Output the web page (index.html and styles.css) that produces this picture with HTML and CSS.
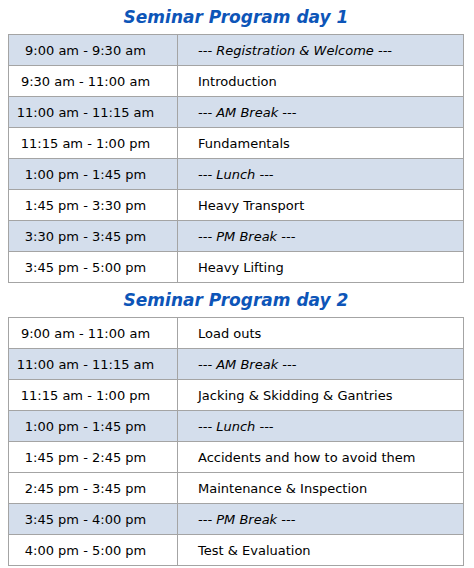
FILE: index.html
```html
<!DOCTYPE html>
<html>
<head>
<meta charset="utf-8">
<link rel="stylesheet" href="styles.css">
</head>
<body>
<div class="page">
  <h2 class="title">Seminar Program day 1</h2>
  <table class="program">
    <tr class="shade"><td class="time">9:00 am - 9:30 am</td><td class="act brk">--- Registration &amp; Welcome ---</td></tr>
    <tr><td class="time">9:30 am - 11:00 am</td><td class="act">Introduction</td></tr>
    <tr class="shade"><td class="time">11:00 am - 11:15 am</td><td class="act brk">--- AM Break ---</td></tr>
    <tr><td class="time">11:15 am - 1:00 pm</td><td class="act">Fundamentals</td></tr>
    <tr class="shade"><td class="time">1:00 pm - 1:45 pm</td><td class="act brk">--- Lunch ---</td></tr>
    <tr><td class="time">1:45 pm - 3:30 pm</td><td class="act">Heavy Transport</td></tr>
    <tr class="shade"><td class="time">3:30 pm - 3:45 pm</td><td class="act brk">--- PM Break ---</td></tr>
    <tr><td class="time">3:45 pm - 5:00 pm</td><td class="act">Heavy Lifting</td></tr>
  </table>
  <h2 class="title">Seminar Program day 2</h2>
  <table class="program">
    <tr><td class="time">9:00 am - 11:00 am</td><td class="act">Load outs</td></tr>
    <tr class="shade"><td class="time">11:00 am - 11:15 am</td><td class="act brk">--- AM Break ---</td></tr>
    <tr><td class="time">11:15 am - 1:00 pm</td><td class="act">Jacking &amp; Skidding &amp; Gantries</td></tr>
    <tr class="shade"><td class="time">1:00 pm - 1:45 pm</td><td class="act brk">--- Lunch ---</td></tr>
    <tr><td class="time">1:45 pm - 2:45 pm</td><td class="act">Accidents and how to avoid them</td></tr>
    <tr><td class="time">2:45 pm - 3:45 pm</td><td class="act">Maintenance &amp; Inspection</td></tr>
    <tr class="shade"><td class="time">3:45 pm - 4:00 pm</td><td class="act brk">--- PM Break ---</td></tr>
    <tr><td class="time">4:00 pm - 5:00 pm</td><td class="act">Test &amp; Evaluation</td></tr>
  </table>
</div>
</body>
</html>
```
FILE: styles.css
```css
html, body {
  margin: 0;
  padding: 0;
  background: #ffffff;
}
.page {
  padding: 0 10px 0 8px;
  font-family: "DejaVu Sans", Verdana, sans-serif;
  color: #000000;
}
.title {
  margin: 0;
  height: 34px;
  line-height: 34px;
  text-align: center;
  font-size: 17px;
  font-weight: bold;
  font-style: italic;
  color: #0d55b8;
}
.program {
  width: 100%;
  border-collapse: collapse;
  font-size: 13px;
}
.program td {
  height: 30px;
  padding: 0;
  border: 1px solid #a4a4a4;
  vertical-align: middle;
}
.program .time {
  width: 153px;
  padding-right: 15px;
  text-align: center;
}
.program .act {
  padding-left: 20px;
  text-align: left;
}
.program .brk {
  font-style: italic;
}
.shade td {
  background: #d4deec;
}
```
